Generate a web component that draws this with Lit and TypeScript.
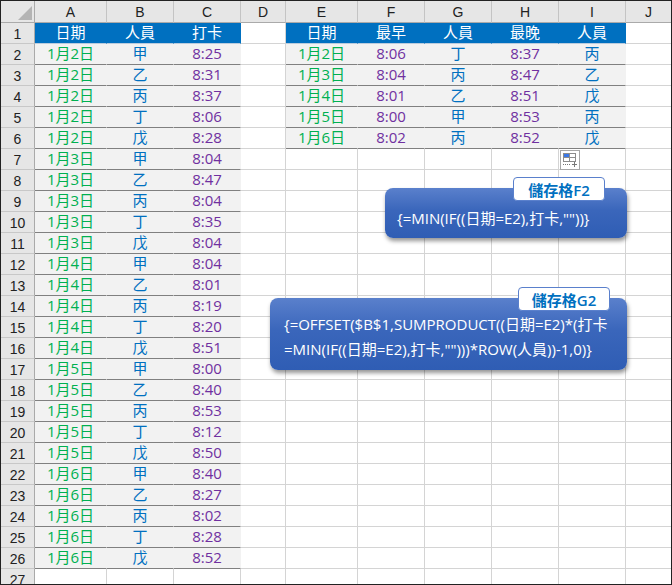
import { LitElement, html, css } from "lit";
import { customElement } from "lit/decorators.js";

const COLS = ["A", "B", "C", "D", "E", "F", "G", "H", "I", "J"];
type Kind = "" | "d" | "n" | "t" | "h";
const left: [string, string, string][] = [
  ["1月2日","甲","8:25"],["1月2日","乙","8:31"],["1月2日","丙","8:37"],["1月2日","丁","8:06"],["1月2日","戊","8:28"],
  ["1月3日","甲","8:04"],["1月3日","乙","8:47"],["1月3日","丙","8:04"],["1月3日","丁","8:35"],["1月3日","戊","8:04"],
  ["1月4日","甲","8:04"],["1月4日","乙","8:01"],["1月4日","丙","8:19"],["1月4日","丁","8:20"],["1月4日","戊","8:51"],
  ["1月5日","甲","8:00"],["1月5日","乙","8:40"],["1月5日","丙","8:53"],["1月5日","丁","8:12"],["1月5日","戊","8:50"],
  ["1月6日","甲","8:40"],["1月6日","乙","8:27"],["1月6日","丙","8:02"],["1月6日","丁","8:28"],["1月6日","戊","8:52"],
];
const right: [string, string, string, string, string][] = [
  ["1月2日","8:06","丁","8:37","丙"],
  ["1月3日","8:04","丙","8:47","乙"],
  ["1月4日","8:01","乙","8:51","戊"],
  ["1月5日","8:00","甲","8:53","丙"],
  ["1月6日","8:02","丙","8:52","戊"],
];

function cellsFor(row: number): { text: string; kind: Kind }[] {
  const out: { text: string; kind: Kind }[] = COLS.map(() => ({ text: "", kind: "" as Kind }));
  if (row === 1) {
    ["日期","人員","打卡"].forEach((t, i) => (out[i] = { text: t, kind: "h" }));
    ["日期","最早","人員","最晚","人員"].forEach((t, i) => (out[i + 4] = { text: t, kind: "h" }));
    return out;
  }
  const l = left[row - 2];
  if (l) {
    out[0] = { text: l[0], kind: "d" };
    out[1] = { text: l[1], kind: "n" };
    out[2] = { text: l[2], kind: "t" };
  }
  const r = right[row - 2];
  if (r) {
    out[4] = { text: r[0], kind: "d" };
    out[5] = { text: r[1], kind: "t" };
    out[6] = { text: r[2], kind: "n" };
    out[7] = { text: r[3], kind: "t" };
    out[8] = { text: r[4], kind: "n" };
  }
  return out;
}

@customElement("app-root")
export class AppRoot extends LitElement {
  static styles = css`
    :host {
      display: block;
      width: 672px;
      height: 585px;
      overflow: hidden;
      background: #fff;
      font-family: "Open Sans", "Noto Sans CJK TC", sans-serif;
    }
    .frame {
      position: relative;
      box-sizing: border-box;
      width: 672px;
      height: 585px;
      border: 1px solid #222;
      overflow: hidden;
    }
    .sheet {
      display: grid;
      grid-template-columns: 34px 72px 67px 67px 45px 72px 67px 67px 67px 67px 46px;
      grid-template-rows: 22px repeat(27, 21px);
    }
    .c {
      box-sizing: border-box;
      display: flex;
      align-items: center;
      justify-content: center;
      font-size: 15px;
      line-height: 1;
      border-right: 1px solid #d4d4d4;
      border-bottom: 1px solid #d4d4d4;
      white-space: nowrap;
      overflow: hidden;
    }
    .corner {
      background: #e6e6e6;
      border-right: 1px solid #aaa;
      border-bottom: 1px solid #aaa;
      align-items: flex-end;
      justify-content: flex-end;
      padding: 0 2px 2px 0;
    }
    .ch {
      background: #e6e6e6;
      color: #222;
      font-family: "Liberation Sans", sans-serif;
      font-size: 14px;
      border-right: 1px solid #c4c4c4;
      border-bottom: 1px solid #aaa;
    }
    .rh {
      background: #e6e6e6;
      color: #222;
      font-family: "Liberation Sans", sans-serif;
      font-size: 14px;
      border-right: 1px solid #aaa;
      border-bottom: 1px solid #c8c8c8;
      padding-top: 2px;
    }
    .h {
      background: #0070c0;
      color: #fff;
      border-right-color: #0070c0;
      border-bottom-color: #bcd;
      padding-bottom: 1px;
    }
    .d, .n, .t {
      background: #f2f2f2;
      border-right-color: #f2f2f2;
      border-bottom-color: #808080;
      padding-bottom: 2px;
    }
    .d { color: #00b050; }
    .n { color: #0070c0; }
    .t { color: #7030a0; }
    .paste {
      position: absolute;
      left: 559px;
      top: 149px;
      width: 20px;
      height: 20px;
      box-sizing: border-box;
      background: #fff;
      border: 1px solid #a6a6a6;
    }
    .paste svg { display: block; }
    .box {
      position: absolute;
      box-sizing: border-box;
      border-radius: 8px;
      background: linear-gradient(#5a80cc, #3a66bb 45%, #2f5db4);
      color: #fff;
      font-size: 15px;
      box-shadow: 1px 3px 4px rgba(0, 0, 0, 0.42);
    }
    .one {
      left: 384px;
      top: 187px;
      width: 242px;
      height: 50px;
      padding: 20px 12px 0;
      line-height: 20px;
    }
    .two {
      left: 269px;
      top: 297px;
      width: 357px;
      height: 72px;
      padding: 14px 14px 0;
      line-height: 25px;
      white-space: nowrap;
    }
    .tag {
      position: absolute;
      box-sizing: border-box;
      display: flex;
      align-items: center;
      justify-content: center;
      width: 92px;
      height: 24px;
      background: #fff;
      border: 1px solid #5a80cc;
      border-radius: 4px;
      color: #0070c0;
      font-size: 15px;
      font-weight: 600;
    }
    .tag1 { left: 512px; top: 176px; }
    .tag2 { left: 517px; top: 286px; }
  `;

  render() {
    const rows = Array.from({ length: 27 }, (_, i) => i + 1);
    return html`
      <div class="frame">
        <div class="sheet">
          <div class="c corner">
            <svg width="14" height="14" viewBox="0 0 14 14"><path d="M14 0V14H0Z" fill="#b4b4b4" /></svg>
          </div>
          ${COLS.map((c) => html`<div class="c ch">${c}</div>`)}
          ${rows.map(
            (r) => html`
              <div class="c rh">${r}</div>
              ${cellsFor(r).map((c) => html`<div class="c ${c.kind}">${c.text}</div>`)}
            `
          )}
        </div>
        <div class="paste">
          <svg width="18" height="18" viewBox="0 0 18 18">
            <rect x="2.5" y="2.5" width="12" height="8" fill="#fff" stroke="#8c8c8c" />
            <rect x="3" y="3" width="6" height="4" fill="#3b78e7" />
            <path d="M8.5 2.5V10.5M2.5 6.5H14.5" stroke="#8c8c8c" fill="none" />
            <path d="M2 13.5H9" stroke="#777" stroke-dasharray="1 1" fill="none" />
            <path d="M13.5 11V16M11 13.5H16" stroke="#777" fill="none" />
          </svg>
        </div>
        <div class="box one">{=MIN(IF((日期=E2),打卡,""))}</div>
        <div class="tag tag1">儲存格F2</div>
        <div class="box two">{=OFFSET($B$1,SUMPRODUCT((日期=E2)*(打卡<br />=MIN(IF((日期=E2),打卡,"")))*ROW(人員))-1,0)}</div>
        <div class="tag tag2">儲存格G2</div>
      </div>
    `;
  }
}
